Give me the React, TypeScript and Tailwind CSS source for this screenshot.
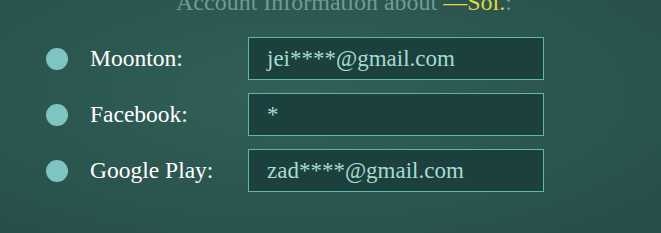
import React from "react";

const rows = [
  { label: "Moonton:", value: "jei****@gmail.com" },
  { label: "Facebook:", value: "*" },
  { label: "Google Play:", value: "zad****@gmail.com" },
];

export default function App() {
  return (
    <div className="w-[661px] h-[233px] overflow-hidden font-['Liberation_Serif','Times_New_Roman',serif] bg-[radial-gradient(ellipse_at_45%_40%,#325f59_0%,#2b5650_55%,#264d48_100%)]">
      <div className="mt-[-12px] pl-[176px] font-['Liberation_Serif',serif] text-[24px] leading-[28px] text-[#6f9c95] whitespace-nowrap">
        Account Information about <span className="text-[#e3d63e]">—Sol.</span>:
      </div>
      <div className="mt-[21px] flex flex-col gap-[13px]">
        {rows.map((r) => (
          <div key={r.label} className="flex items-center h-[43px]">
            <div className="ml-[46px] w-[22px] h-[22px] rounded-full bg-[#7ec4c0]" />
            <div className="ml-[22px] w-[158px] font-['Liberation_Serif',serif] text-[23.5px] text-white leading-none">
              {r.label}
            </div>
            <div className="w-[296px] h-[43px] border border-[#5fb8a8] bg-[#1c403d] flex items-center pl-[18px] font-['Liberation_Serif',serif] text-[23px] text-[#a6dcd0] leading-none">
              {r.value}
            </div>
          </div>
        ))}
      </div>
    </div>
  );
}
